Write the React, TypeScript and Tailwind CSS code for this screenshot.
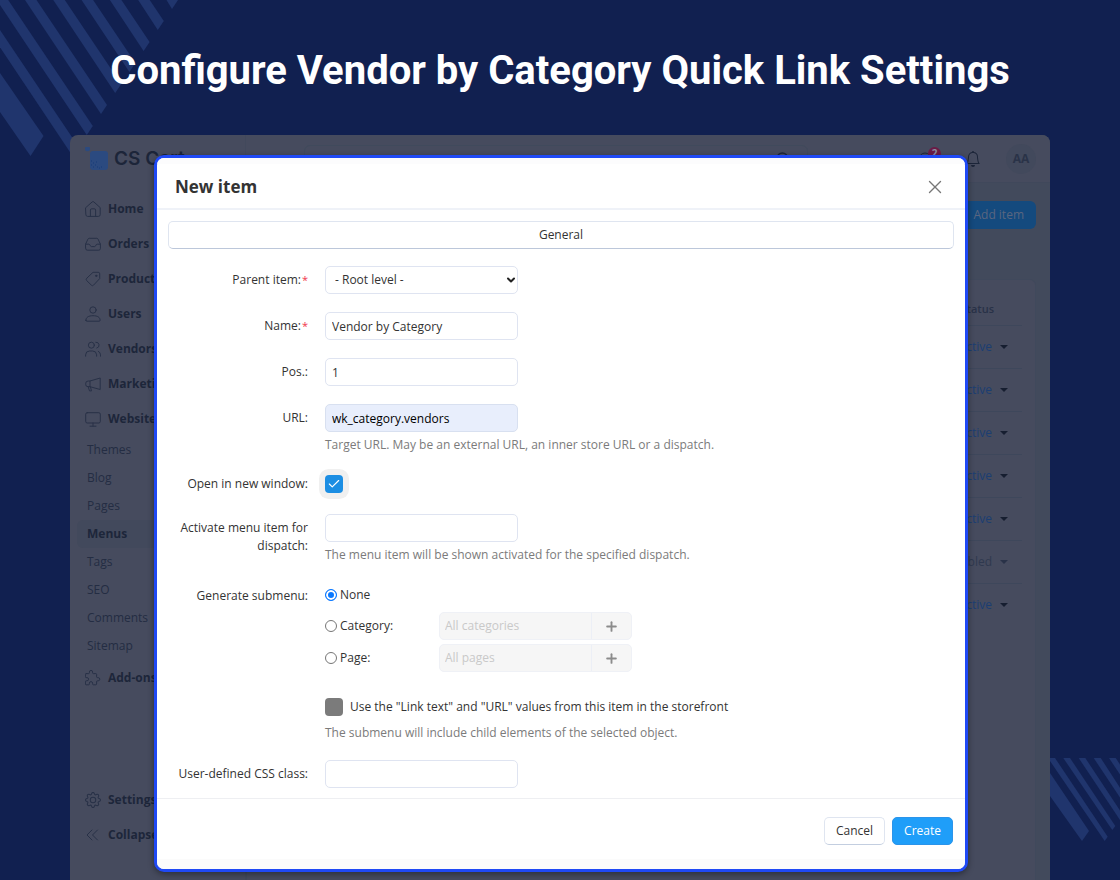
import type { ReactNode } from 'react';
import { Check, ChevronDown, Plus, Search, X, RefreshCw } from 'lucide-react';
import { BsBell, BsGear } from 'react-icons/bs';

function Glyph({ children, box = 16 }: { children: ReactNode; box?: number }) {
  return (
    <svg
      viewBox={`0 0 ${box} ${box}`}
      className="size-4 shrink-0"
      fill="none"
      stroke="currentColor"
      strokeWidth={box / 16}
      strokeLinecap="round"
      strokeLinejoin="round"
      aria-hidden="true"
    >
      {children}
    </svg>
  );
}

const homeIcon = (
  <Glyph>
    <path d="M.8 6.6 7.2.9a1.2 1.2 0 0 1 1.6 0l6.4 5.7v7a1.8 1.8 0 0 1-1.8 1.8H2.6a1.8 1.8 0 0 1-1.8-1.8Z" />
    <path d="M5.4 15.2V9a1.2 1.2 0 0 1 1.2-1.2h2.8A1.2 1.2 0 0 1 10.6 9v6.2" />
  </Glyph>
);
const ordersIcon = (
  <Glyph>
    <path d="M.6 8.2 2.9 3.2A1.5 1.5 0 0 1 4.3 2.3h7.4a1.5 1.5 0 0 1 1.4.9l2.3 5v4.3a1.7 1.7 0 0 1-1.7 1.7H2.3a1.7 1.7 0 0 1-1.7-1.7Z" />
    <path d="M.6 8.2h3.2c1.5 0 1.3 2.4 2.7 2.4h3c1.4 0 1.2-2.4 2.7-2.4h3.2" />
  </Glyph>
);
const tagIcon = (
  <Glyph>
    <path d="M8.4 1.3h4.8a1.5 1.5 0 0 1 1.5 1.5v4.8L8.5 14.2a1.5 1.5 0 0 1-2.1 0L1.6 9.5a1.5 1.5 0 0 1 0-2.1Z" />
    <circle cx="11.2" cy="4.8" r=".7" fill="currentColor" />
  </Glyph>
);
const userIcon = (
  <Glyph>
    <circle cx="8" cy="4" r="3.2" />
    <path d="M.9 14.3c0-3 2.5-4.6 7.1-4.6s7.1 1.6 7.1 4.6a.9.9 0 0 1-.9.9H1.8a.9.9 0 0 1-.9-.9Z" />
  </Glyph>
);
const vendorsIcon = (
  <Glyph>
    <circle cx="6.4" cy="4.2" r="3" />
    <path d="M.6 15.2v-1.4a4 4 0 0 1 4-3.8h3a4 4 0 0 1 4 3.8v1.4M10.8 1.2a3 3 0 0 1 1 5.9M13.3 10.3a4 4 0 0 1 2.2 3.5v1.4" />
  </Glyph>
);
const megaphoneIcon = (
  <Glyph>
    <path d="M5 5 15.2 2v11.5L5 10.7H3a2.3 2.3 0 0 1-2.3-2.3V7.3A2.3 2.3 0 0 1 3 5ZM5 5v5.7M3.2 10.9l1.3 4h2l-1-3.7" />
  </Glyph>
);
const monitorIcon = (
  <Glyph>
    <rect x=".7" y="1.7" width="14.6" height="10.3" rx="1.5" />
    <path d="M8 12v3M5 15.2h6" />
  </Glyph>
);
const puzzleIcon = (
  <Glyph box={20}>
    <path
      transform="translate(-2.5 -2.5)"
      d="M4 7h3a1 1 0 0 0 1-1v-1a2 2 0 0 1 4 0v1a1 1 0 0 0 1 1h3a1 1 0 0 1 1 1v3a1 1 0 0 0 1 1h1a2 2 0 0 1 0 4h-1a1 1 0 0 0-1 1v3a1 1 0 0 1-1 1h-3a1 1 0 0 1-1-1v-1a2 2 0 0 0-4 0v1a1 1 0 0 1-1 1h-3a1 1 0 0 1-1-1v-3a1 1 0 0 1 1-1h1a2 2 0 0 0 0-4h-1a1 1 0 0 1-1-1v-3a1 1 0 0 1 1-1"
    />
  </Glyph>
);
const collapseIcon = (
  <Glyph>
    <path d="M7 3 2 8l5 5M12.5 3l-5 5 5 5" />
  </Glyph>
);

const mainNav = [
  { label: 'Home', icon: homeIcon },
  { label: 'Orders', icon: ordersIcon },
  { label: 'Products', icon: tagIcon },
  { label: 'Users', icon: userIcon },
  { label: 'Vendors', icon: vendorsIcon },
  { label: 'Marketing', icon: megaphoneIcon },
  { label: 'Website', icon: monitorIcon },
];
const subNav = ['Themes', 'Blog', 'Pages', 'Menus', 'Tags', 'SEO', 'Comments', 'Sitemap'];
const statuses = ['Active', 'Active', 'Active', 'Active', 'Active', 'Disabled', 'Active'];

function NavLink({ label, icon }: { label: string; icon: ReactNode }) {
  return (
    <a href="#" className="flex h-[35px] items-center gap-[7px] pl-[15px] text-[12px] font-bold text-[#1d263a]">
      <span className="text-[#283147]">{icon}</span>
      {label}
    </a>
  );
}

function Sidebar() {
  return (
    <aside className="flex w-44 shrink-0 flex-col border-r border-[#42495c] bg-[#464b5e] pb-7">
      <a href="#" className="flex h-12 items-center gap-[5px] pl-[15px] text-[19px] text-[#1c2539]">
        <svg viewBox="0 0 24 24" className="size-6" aria-hidden="true">
          <rect x="5" y="4" width="18" height="19" rx="3" fill="#2b4a80" />
          <circle cx="2.5" cy="1.8" r="2.5" fill="#2b4a80" />
          <path d="M6 14h1M8 16h1M6 18h1M10 18h1M8 20h1M12 20h1M11 15h1M14 21h1M16 20h1" stroke="#173a78" />
        </svg>
        <span className="font-['Inter',sans-serif] font-semibold">CS Cart</span>
      </a>
      <nav className="flex flex-col pt-2">
        {mainNav.map((item) => (
          <NavLink key={item.label} {...item} />
        ))}
        {subNav.map((label) => (
          <a
            key={label}
            href="#"
            className={
              label === 'Menus'
                ? 'ml-[7px] flex h-7 items-center rounded-md bg-[#42495c] pl-[10px] text-[12px] font-bold text-[#1d263a]'
                : 'ml-[7px] flex h-7 items-center pl-[10px] text-[12px] text-[#242d43]'
            }
          >
            {label}
          </a>
        ))}
        <NavLink label="Add-ons" icon={puzzleIcon} />
      </nav>
      <nav className="mt-auto flex flex-col">
        <NavLink label="Settings" icon={<BsGear className="size-4" />} />
        <NavLink label="Collapse" icon={collapseIcon} />
      </nav>
    </aside>
  );
}

function Workspace() {
  return (
    <main className="flex min-w-0 flex-1 flex-col bg-[#424a5c]">
      <header className="flex h-12 items-center justify-end border-b border-[#40485b] bg-[#464b5e] pr-[14px] text-[#1c2539]">
        <div className="mr-auto ml-[58px] flex h-7 w-[504px] items-center justify-end rounded-md border border-[#404a5c] pr-4">
          <Search className="size-4" />
        </div>
        <button type="button" aria-label="Updates" className="relative mr-8">
          <RefreshCw className="size-4" strokeWidth={1.5} />
          <span className="absolute -top-1 -right-2 flex size-[13px] items-center justify-center rounded-full bg-[#6a1b46] text-[10px] font-bold text-[#8b8fa0]">
            2
          </span>
        </button>
        <button type="button" aria-label="Notifications" className="mr-[25px]">
          <BsBell className="size-4" />
        </button>
        <button type="button" className="size-[30px] rounded-full bg-[#42495c] text-[12px] font-bold text-[#2a3348]">
          AA
        </button>
      </header>
      <div className="flex flex-1 flex-col pt-[18px] pr-[14px]">
        <button type="button" className="h-7 w-[88px] self-end rounded-md bg-[#144a7e] pr-3 text-right text-[12px] text-[#5a6680]">
          Add item
        </button>
        <section className="mt-[50px] flex-1 rounded-t-md border-x border-t border-[#40495c] bg-[#464b5e] px-[13px] pt-[13px]">
          <table className="w-full text-right text-[12px]">
            <thead>
              <tr className="border-b border-[#3e475b]">
                <th className="h-8 pr-7 text-right text-[11px] font-semibold text-[#293248]">Status</th>
              </tr>
            </thead>
            <tbody>
              {statuses.map((status, index) => (
                <tr key={index} className="h-[43px] border-b border-[#3e475b] last:border-b-0">
                  <td className={status === 'Active' ? 'pr-[14px] text-[#1b3e72]' : 'pr-[14px] text-[#2f394f]'}>
                    <span className="inline-flex items-center gap-2">
                      {status}
                      <svg
                        viewBox="0 0 8 4"
                        className={status === 'Active' ? 'h-1 w-2 fill-[#161e30]' : 'h-1 w-2 fill-[#293248]'}
                        aria-hidden="true"
                      >
                        <path d="M0 0h8L4 4Z" />
                      </svg>
                    </span>
                  </td>
                </tr>
              ))}
            </tbody>
          </table>
        </section>
      </div>
    </main>
  );
}

const fieldClass =
  'block h-7 w-[193px] rounded-[5px] border border-[#dfe4f1] bg-white px-[6px] text-[12px] text-[#333333] outline-none';

function Row({ label, id, required, children }: { label: string; id: string; required?: boolean; children: ReactNode }) {
  return (
    <div className="grid grid-cols-[140px_1fr] gap-x-[17px]">
      <label htmlFor={id} className="pt-[5px] text-right">
        {label}
        {required && <span className="pl-px text-[11px] text-[#f0364c]">*</span>}
      </label>
      <div>{children}</div>
    </div>
  );
}

function Hint({ children }: { children: ReactNode }) {
  return <p className="mt-1 text-[#7b7b7b]">{children}</p>;
}

function Picker({ label, placeholder, id }: { label: string; placeholder: string; id: string }) {
  return (
    <div className="flex h-7 items-center">
      <label htmlFor={id} className="flex w-[114px] items-center gap-[3px]">
        <input
          id={id}
          type="radio"
          name="submenu"
          className="size-3 appearance-none rounded-full border border-[#767676] bg-white"
        />
        {label}
      </label>
      <div className="flex h-7 w-[193px] overflow-hidden rounded-[5px] border border-[#eff1f6] bg-[#f6f6f6]">
        <input
          type="text"
          disabled
          aria-label={placeholder}
          placeholder={placeholder}
          className="min-w-0 flex-1 px-[5px] text-[12px] placeholder:text-[#c9c9c9]"
        />
        <button
          type="button"
          disabled
          aria-label={`Add ${label}`}
          className="flex w-10 items-center justify-center border-l border-[#eceff6] text-[#8c8c8c]"
        >
          <Plus className="size-[15px]" strokeWidth={3} />
        </button>
      </div>
    </div>
  );
}

function NewItemDialog() {
  return (
    <div
      role="dialog"
      aria-labelledby="dialog-title"
      className="absolute top-5 right-[82px] left-[84px] overflow-hidden rounded-[10px] border-[3px] border-[#1f49f5] bg-white text-[12px] leading-[18px] text-[#333333] shadow-[0_2px_6px_rgba(0,0,0,0.4)]"
    >
      <div className="h-[6px] bg-[#fcfcfd]" />
      <header className="flex h-[46px] items-center justify-between border-b-2 border-[#eff2f8] pt-[2px] pr-[19px] pl-[18px]">
        <h2 id="dialog-title" className="text-[17px] font-bold">
          New item
        </h2>
        <button type="button" aria-label="Close" className="text-[#777777]">
          <X className="size-[22px]" strokeWidth={1.5} />
        </button>
      </header>
      <form className="px-[11px] pt-[11px] pb-[10px]">
        <button
          type="button"
          className="h-7 w-full rounded-[5px] border border-[#dfe5f0] border-b-[#bcc7da] bg-white"
        >
          General
        </button>
        <div className="mt-[17px] flex flex-col gap-[18px]">
          <Row label="Parent item:" id="parent" required>
            <div className="relative w-[193px]">
              <select id="parent" className={`${fieldClass} appearance-none pl-[9px]`}>
                <option>- Root level -</option>
              </select>
              <ChevronDown
                className="pointer-events-none absolute top-2 right-[1px] size-3 text-[#222222]"
                strokeWidth={4}
              />
            </div>
          </Row>
          <Row label="Name:" id="name" required>
            <input id="name" type="text" defaultValue="Vendor by Category" className={fieldClass} />
          </Row>
          <Row label="Pos.:" id="position">
            <input id="position" type="text" defaultValue="1" className={fieldClass} />
          </Row>
          <Row label="URL:" id="url">
            <input
              id="url"
              type="text"
              defaultValue="wk_category.vendors"
              className="block h-7 w-[193px] rounded-[5px] border border-[#d8e0f0] bg-[#e8eefc] px-[6px] text-[12px] text-black outline-none"
            />
            <Hint>Target URL. May be an external URL, an inner store URL or a dispatch.</Hint>
          </Row>
          <div className="grid h-6 grid-cols-[140px_1fr] items-center gap-x-[17px]">
            <label htmlFor="new-window" className="text-right">
              Open in new window:
            </label>
            <span className="relative flex size-[18px]">
              <input
                id="new-window"
                type="checkbox"
                defaultChecked
                className="size-[18px] appearance-none rounded-[4px] bg-[#1c8ee3] ring-6 ring-[#f0f0f0]"
              />
              <Check className="pointer-events-none absolute top-[2px] left-[2px] size-[14px] text-white" strokeWidth={2} />
            </span>
          </div>
          <Row label="Activate menu item for dispatch:" id="dispatch">
            <input id="dispatch" type="text" className={fieldClass} />
            <Hint>The menu item will be shown activated for the specified dispatch.</Hint>
          </Row>
          <Row label="Generate submenu:" id="submenu-none">
            <label htmlFor="submenu-none" className="flex h-[26px] items-center gap-[3px]">
              <input
                id="submenu-none"
                type="radio"
                name="submenu"
                defaultChecked
                className="size-3 appearance-none rounded-full border border-[#0a78ff] bg-[#0a78ff] shadow-[inset_0_0_0_2px_white]"
              />
              None
            </label>
            <div className="mt-1 flex flex-col gap-1">
              <Picker id="submenu-category" label="Category:" placeholder="All categories" />
              <Picker id="submenu-page" label="Page:" placeholder="All pages" />
            </div>
            <label htmlFor="use-values" className="mt-[26px] flex items-center gap-[7px]">
              <input id="use-values" type="checkbox" className="size-[18px] appearance-none rounded-[4px] bg-[#7b7b7b]" />
              Use the "Link text" and "URL" values from this item in the storefront
            </label>
            <p className="mt-2 text-[#7b7b7b]">The submenu will include child elements of the selected object.</p>
          </Row>
          <Row label="User-defined CSS class:" id="css-class">
            <input id="css-class" type="text" className={fieldClass} />
          </Row>
        </div>
      </form>
      <footer className="flex justify-end gap-[7px] border-t border-[#eeeff2] pt-[18px] pr-3 pb-[14px]">
        <button type="button" className="h-7 rounded-[5px] border border-[#dfe5f0] border-b-[#c3cee0] bg-white px-[11px]">
          Cancel
        </button>
        <button type="button" className="h-7 rounded-[5px] border border-[#2b94ea] bg-[#1f9ef9] px-[11px] text-white">
          Create
        </button>
      </footer>
      <div className="h-[10px] bg-[#fbfbfb]" />
    </div>
  );
}

function Stripes() {
  const bars = Array.from({ length: 8 }, (_, i) => {
    const top = 178 - 28.3 * i;
    const x = 178 - 14.2 * i;
    const y = 21 * i;
    return `${top - 11.5},0 ${top},0 ${x},${y} ${x - 6},${y + 9}`;
  });
  return (
    <>
      <svg viewBox="0 0 180 160" className="absolute top-0 left-0 h-40 w-45 fill-[#20356d]" aria-hidden="true">
        <polygon points="0,73 43.5,136 30.5,156 0,112" />
        {bars.map((points) => (
          <polygon key={points} points={points} />
        ))}
      </svg>
      <svg viewBox="0 0 70 84" className="absolute right-0 bottom-[38px] h-21 w-[70px] fill-[#20356d]" aria-hidden="true">
        <polygon points="0,15 39,73 32,83 0,38" />
        <polygon points="-1,0 5,0 57.7,78.7 54.7,83 0,3" />
        <polygon points="13.3,0 20,0 65.3,68 62.3,72" />
        <polygon points="28.7,0 35.3,0 73,57 70,62" />
        <polygon points="43.7,0 50.7,0 80,45 77,50" />
        <polygon points="59,0 65.7,0 88,34 85,39" />
      </svg>
    </>
  );
}

export default function App() {
  return (
    <div className="relative flex min-h-screen flex-col overflow-hidden bg-[#112050] font-['Open_Sans','Noto_Sans',sans-serif]">
      <Stripes />
      <h1 className="relative flex h-[135px] items-center justify-center pt-[6px] text-center font-['Roboto',sans-serif] text-[40px] font-bold text-white">
        Configure Vendor by Category Quick Link Settings
      </h1>
      <div className="relative mx-[70px] flex min-h-[745px] flex-1">
        <div className="flex flex-1 overflow-hidden rounded-t-[8px]">
          <Sidebar />
          <Workspace />
        </div>
        <NewItemDialog />
      </div>
    </div>
  );
}
